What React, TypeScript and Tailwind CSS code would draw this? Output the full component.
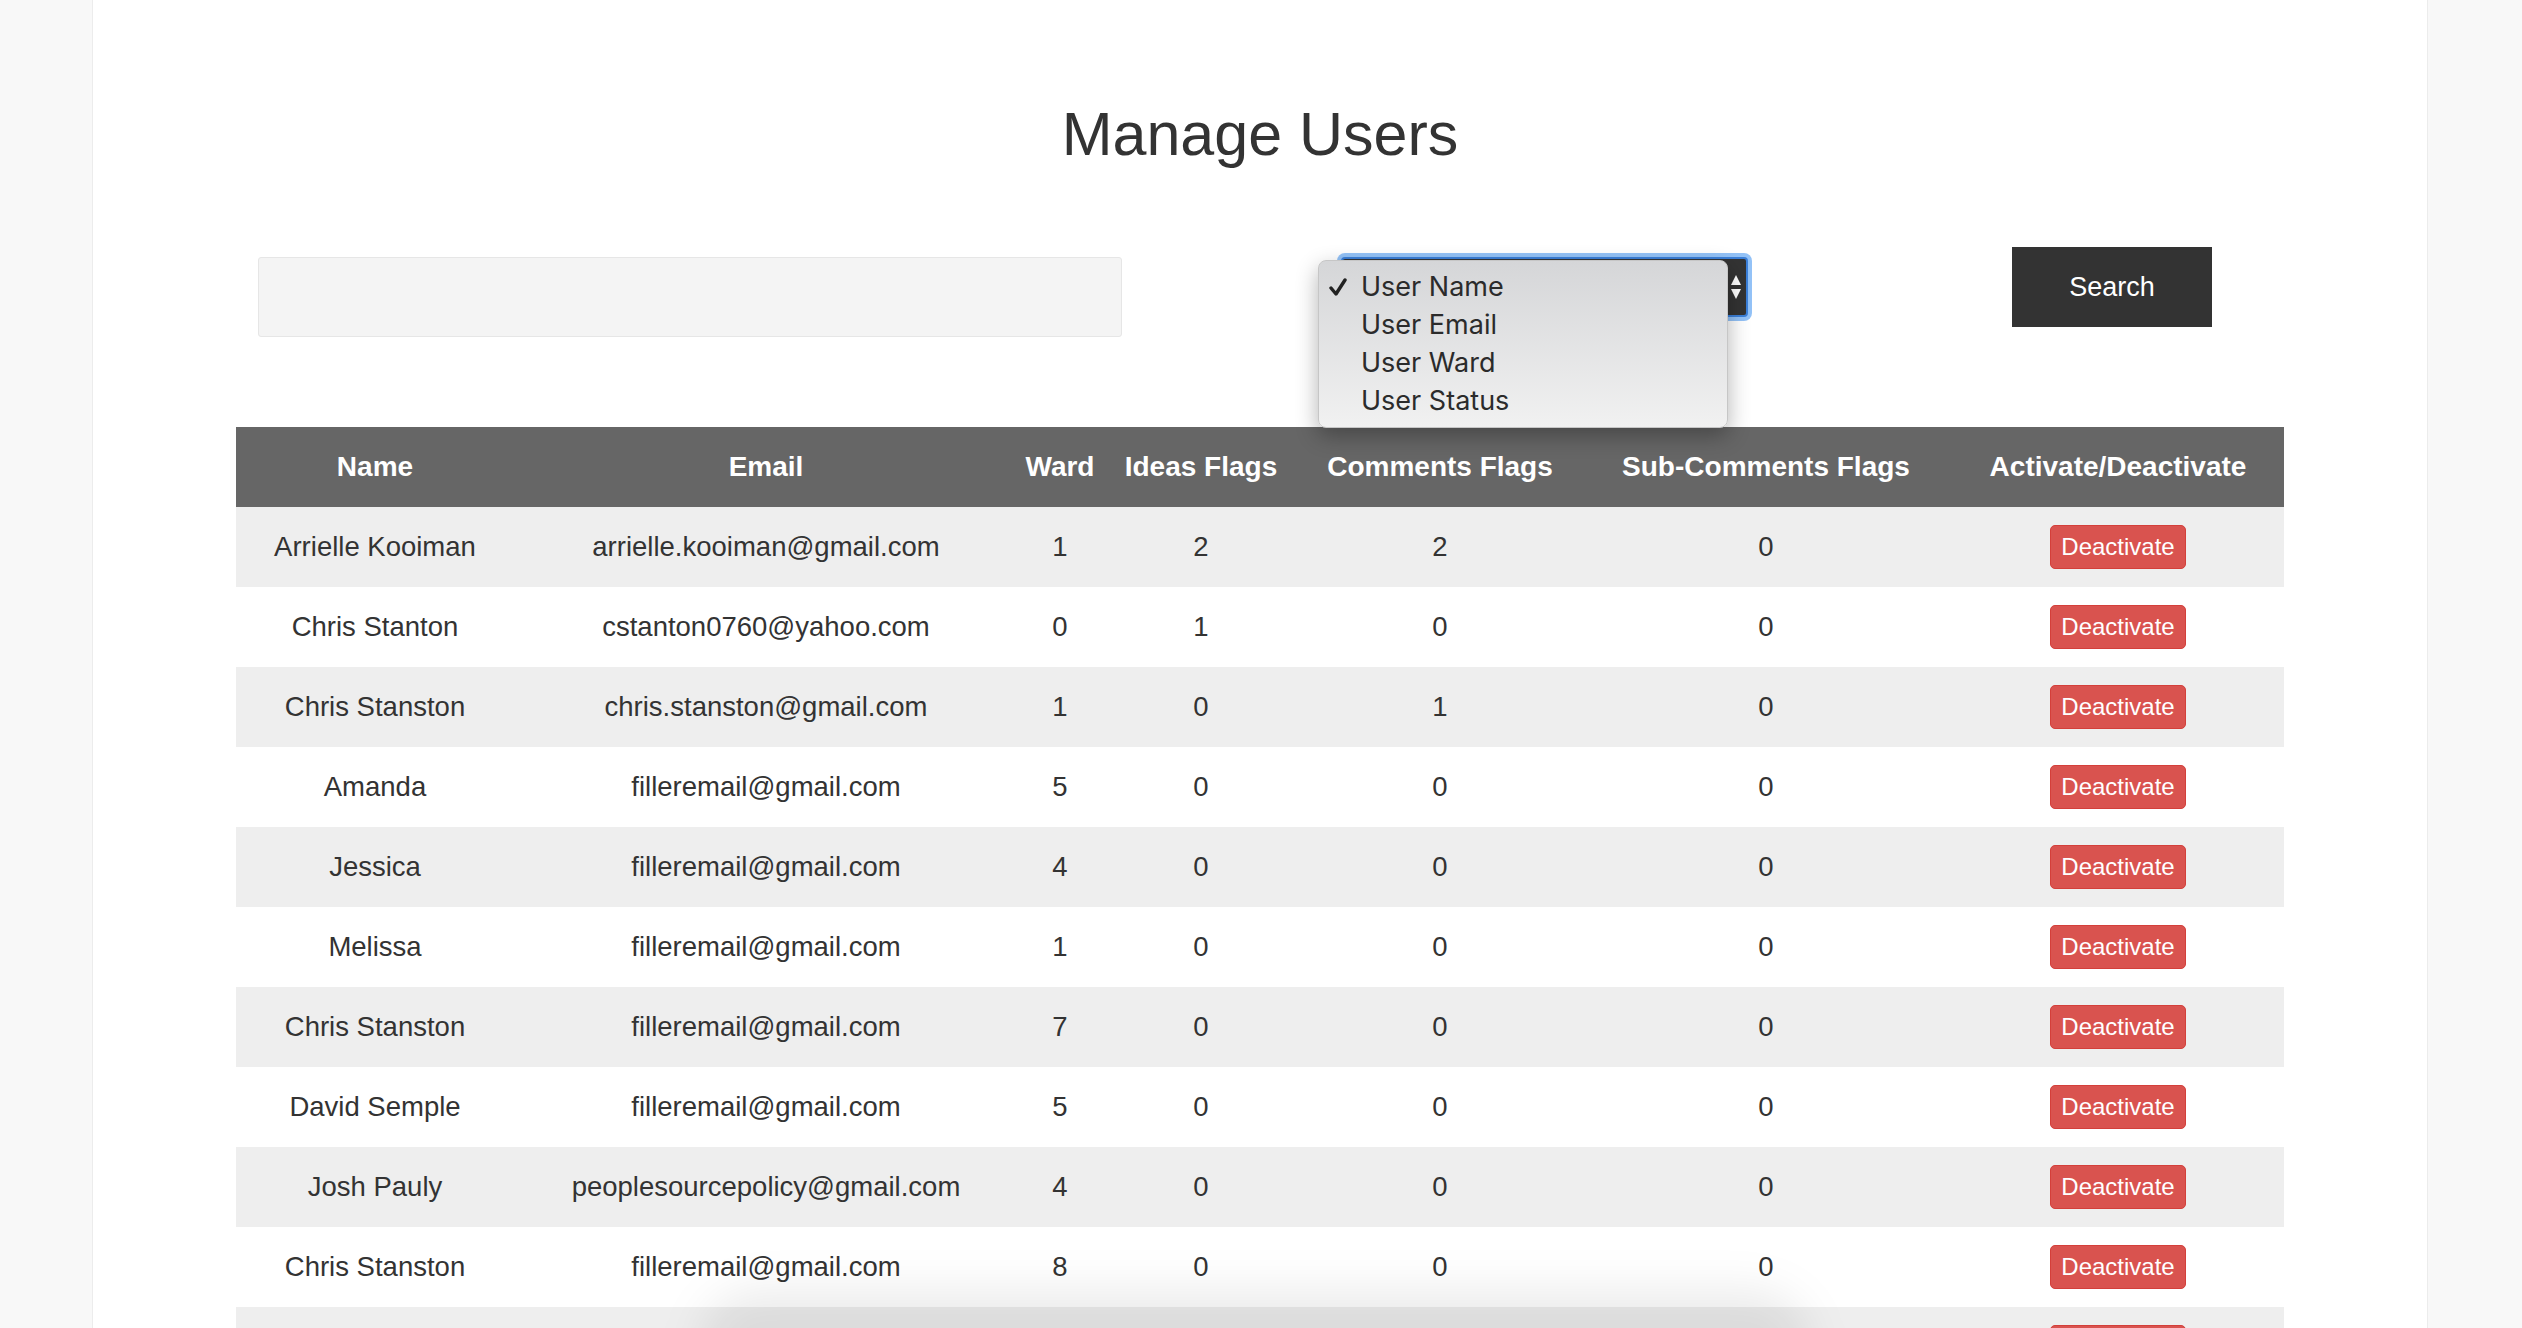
import React from "react";

type User = {
  name: string;
  email: string;
  ward: number;
  ideas: number;
  comments: number;
  subComments: number;
};

const users: User[] = [
  { name: "Arrielle Kooiman", email: "arrielle.kooiman@gmail.com", ward: 1, ideas: 2, comments: 2, subComments: 0 },
  { name: "Chris Stanton", email: "cstanton0760@yahoo.com", ward: 0, ideas: 1, comments: 0, subComments: 0 },
  { name: "Chris Stanston", email: "chris.stanston@gmail.com", ward: 1, ideas: 0, comments: 1, subComments: 0 },
  { name: "Amanda", email: "filleremail@gmail.com", ward: 5, ideas: 0, comments: 0, subComments: 0 },
  { name: "Jessica", email: "filleremail@gmail.com", ward: 4, ideas: 0, comments: 0, subComments: 0 },
  { name: "Melissa", email: "filleremail@gmail.com", ward: 1, ideas: 0, comments: 0, subComments: 0 },
  { name: "Chris Stanston", email: "filleremail@gmail.com", ward: 7, ideas: 0, comments: 0, subComments: 0 },
  { name: "David Semple", email: "filleremail@gmail.com", ward: 5, ideas: 0, comments: 0, subComments: 0 },
  { name: "Josh Pauly", email: "peoplesourcepolicy@gmail.com", ward: 4, ideas: 0, comments: 0, subComments: 0 },
  { name: "Chris Stanston", email: "filleremail@gmail.com", ward: 8, ideas: 0, comments: 0, subComments: 0 },
  { name: "Chris Stanston", email: "filleremail@gmail.com", ward: 2, ideas: 0, comments: 0, subComments: 0 }
];

const options = ["User Name", "User Email", "User Ward", "User Status"];

const columns = [
  { label: "Name", width: "w-[278px]" },
  { label: "Email", width: "w-[504px]" },
  { label: "Ward", width: "w-[84px]" },
  { label: "Ideas Flags", width: "w-[198px]" },
  { label: "Comments Flags", width: "w-[280px]" },
  { label: "Sub-Comments Flags", width: "w-[372px]" },
  { label: "Activate/Deactivate", width: "w-[332px]" }
];

function FieldSelect() {
  return (
    <div className="relative ml-[219px] mt-[10px] h-[60px] w-[407px]">
      <div className="h-full w-full rounded-[4px] border-2 border-[#3b7fd8] bg-[#333] shadow-[0_0_0_4px_#93c2f7]" />
      <svg
        className="absolute right-[6px] top-1/2 -translate-y-1/2"
        width="12"
        height="26"
        viewBox="0 0 12 26"
      >
        <path d="M6 1 L11 11 L1 11 Z" fill="#fff" />
        <path d="M1 15 L11 15 L6 25 Z" fill="#fff" />
      </svg>

      {/* open native menu */}
      <div className="absolute left-[-23px] top-[3px] h-[168px] w-[410px] rounded-[8px] border border-[#c6c6c6] bg-linear-to-b from-[#d5d6d8] to-[#f1f1f1] pt-[7px] shadow-[0_8px_22px_rgba(0,0,0,0.3)] font-['Inter',sans-serif] text-[27px] leading-[38px] text-[#2b2b2b]">
        {options.map((opt, i) => (
          <div key={opt} className="relative pl-[42px]">
            {i === 0 && (
              <svg className="absolute left-[10px] top-[10px]" width="18" height="18" viewBox="0 0 18 18">
                <path d="M2 10 L7 16 L16 2" fill="none" stroke="#222" strokeWidth="3.4" strokeLinecap="round" strokeLinejoin="round" />
              </svg>
            )}
            {opt}
          </div>
        ))}
      </div>
    </div>
  );
}

export default function App() {
  return (
    <div className="relative min-h-screen overflow-hidden bg-[#f8f8f8] font-['Liberation_Sans',Arial,sans-serif] text-[#333]">
      <div className="ml-[92px] min-h-[1328px] w-[2336px] border-x border-[#ececec] bg-white px-[143px] pt-[104px]">
        <h1 className="text-center text-[61px] leading-none text-[#333]">Manage Users</h1>

        <div className="mt-[82px] flex items-start">
          <input
            type="text"
            className="ml-[22px] mt-[10px] h-[80px] w-[864px] rounded-[3px] border border-[#e6e6e6] bg-[#f4f4f4] px-4 outline-none"
          />
          <FieldSelect />
          <button className="ml-[264px] h-[80px] w-[200px] bg-[#333] text-[27px] text-white">Search</button>
        </div>

        <table className="mt-[90px] w-[2048px] table-fixed border-collapse">
          <colgroup>
            {columns.map(c => (
              <col key={c.label} className={c.width} />
            ))}
          </colgroup>
          <thead>
            <tr className="bg-[#666]">
              {columns.map(c => (
                <th key={c.label} className="h-[80px] px-1 text-center text-[28px] font-bold text-white">
                  {c.label}
                </th>
              ))}
            </tr>
          </thead>
          <tbody>
            {users.map((u, i) => (
              <tr key={i} className={i % 2 === 0 ? "bg-[#eeeeee]" : "bg-white"}>
                <td className="h-[80px] text-center text-[27.5px]">{u.name}</td>
                <td className="h-[80px] text-center text-[27.5px]">{u.email}</td>
                <td className="h-[80px] text-center text-[27.5px]">{u.ward}</td>
                <td className="h-[80px] text-center text-[27.5px]">{u.ideas}</td>
                <td className="h-[80px] text-center text-[27.5px]">{u.comments}</td>
                <td className="h-[80px] text-center text-[27.5px]">{u.subComments}</td>
                <td className="h-[80px] text-center">
                  <button className="h-[44px] rounded-[5px] border border-[#d43f3a] bg-[#d9534f] px-[10px] text-[24px] leading-[42px] text-white">
                    Deactivate
                  </button>
                </td>
              </tr>
            ))}
          </tbody>
        </table>
      </div>

      <div className="pointer-events-none absolute left-[700px] top-[1290px] h-[120px] w-[1110px] rounded-[60px] bg-black/[0.08] blur-[22px]" />
    </div>
  );
}
